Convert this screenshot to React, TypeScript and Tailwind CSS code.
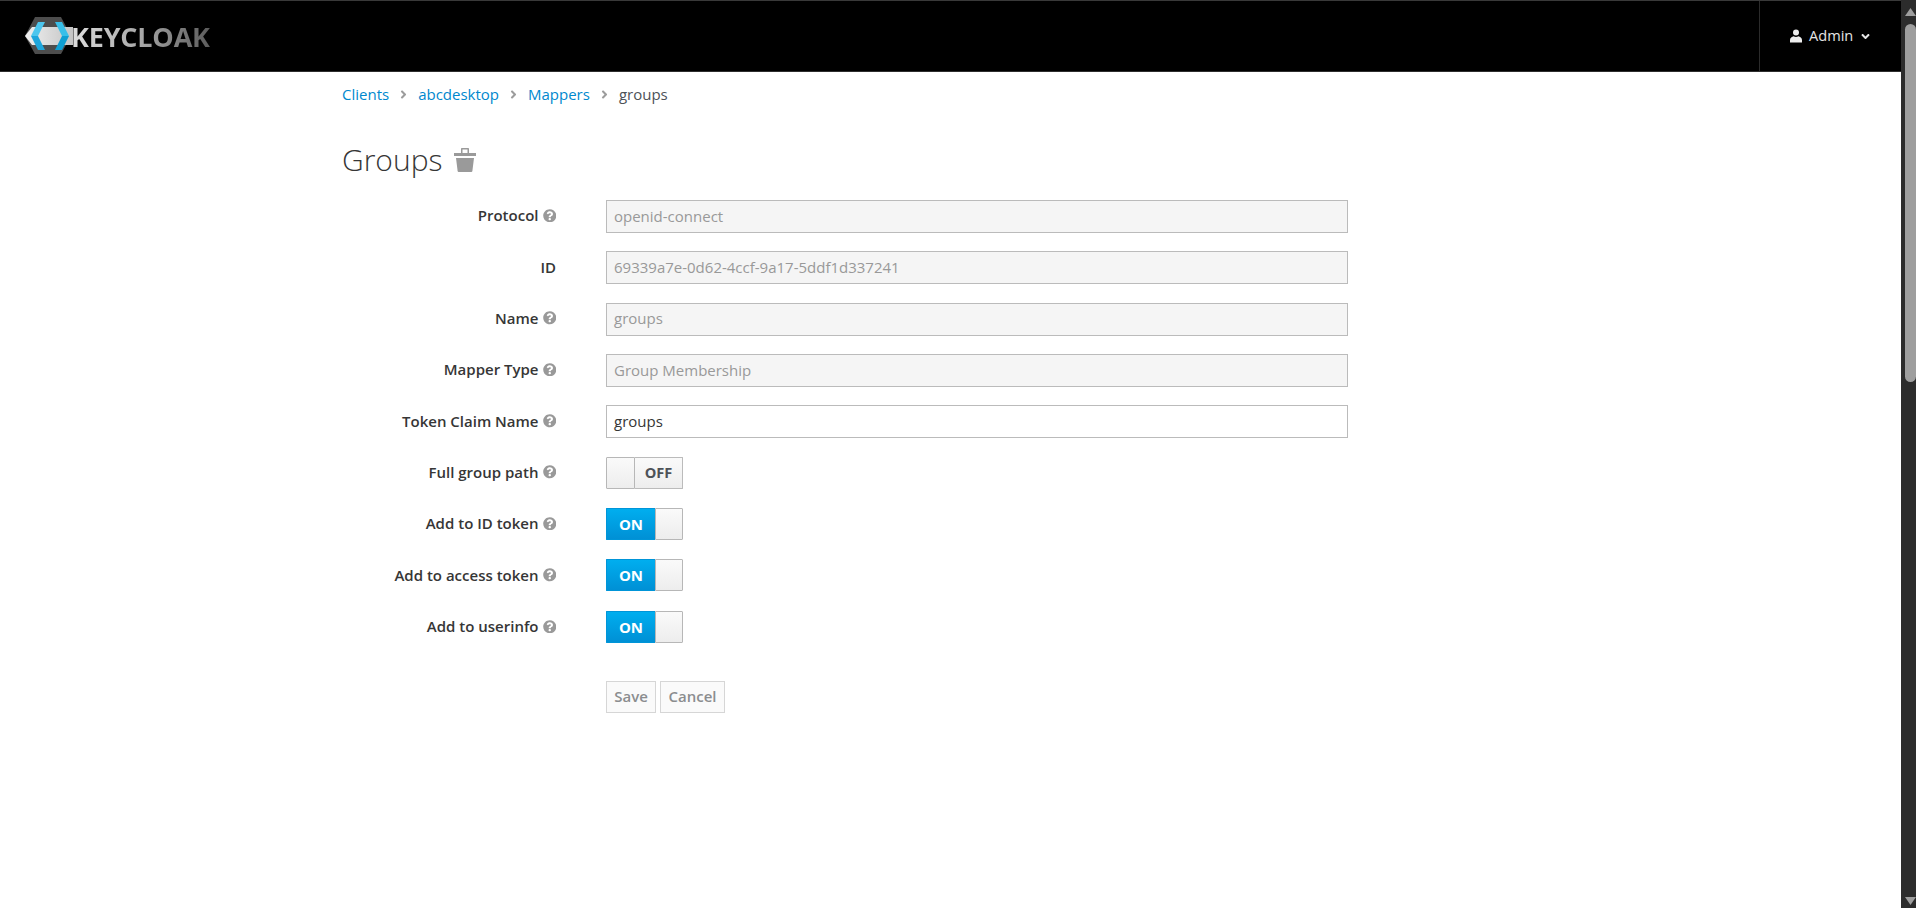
import { FaAngleDown, FaAngleRight, FaQuestionCircle } from "react-icons/fa";

const sans = "font-['Open_Sans',sans-serif]";

const Logo = () => (
  <div className="flex items-center ml-[25px]">
    <svg width="50" height="38" viewBox="0 0 50 38" className="blur-[0.4px]">
      <defs>
        <linearGradient id="band" x1="0" x2="1" y1="0" y2="0">
          <stop offset="0" stopColor="#f0f0f0" />
          <stop offset="1" stopColor="#c4c4c4" />
        </linearGradient>
      </defs>
      <path d="M10 0H36L46 19L36 37H10L0 19Z" fill="#4d4d4d" />
      <path d="M7 10H48V28H7L0 19Z" fill="url(#band)" />
      <path d="M13 5H20L13 19H6Z" fill="#4cc6ee" />
      <path d="M6 19H13L20 33H13Z" fill="#1ea6dc" />
      <path d="M30 5H37L44 19H37Z" fill="#38bfe9" />
      <path d="M37 19H44L37 33H30Z" fill="#0e9fd3" />
    </svg>
    <span className="font-['Open_Sans',sans-serif] font-bold text-[27px] leading-none -ml-[4px] tracking-[-0.2px] text-transparent bg-clip-text bg-gradient-to-r from-[#dedede] via-[#a8a8a8] to-[#5c5c5c] blur-[0.3px]">
      KEYCLOAK
    </span>
  </div>
);

const Header = () => (
  <header className="h-[72px] bg-black border-t border-t-[#393939] border-b border-b-[#2e2e2e] flex items-stretch justify-between shrink-0">
    <Logo />
    <div className="w-[142px] border-l border-[#2b2b2b] flex items-center text-[#e4e4e4] text-[14.6px] pl-[30px]">
      <svg width="12" height="14" viewBox="0 0 12 14" className="mr-[7px]" fill="#eeeeee">
        <circle cx="6" cy="3.4" r="3" />
        <path d="M0 13.5V11C0 8.8 2 7.6 3.6 7.2C5 8.2 7 8.2 8.4 7.2C10 7.6 12 8.8 12 11V13.5Z" />
      </svg>
      <span>Admin</span>
      <FaAngleDown className="ml-[6px] text-[13px]" />
    </div>
  </header>
);

const Crumb = ({ children }: { children: string }) => (
  <>
    <a className="text-[#0088ce]">{children}</a>
    <FaAngleRight className="text-[#9c9c9c] text-[13px] mx-[8px]" />
  </>
);

const Label = ({ text, help = true }: { text: string; help?: boolean }) => (
  <label className="w-[214px] flex items-center justify-end font-semibold text-[#363636] text-[15px] pb-[2px]">
    <span>{text}</span>
    {help && <FaQuestionCircle className="ml-[4px] text-[13.5px] text-[#999999]" />}
  </label>
);

const Field = ({ label, value, disabled, help }: { label: string; value: string; disabled?: boolean; help?: boolean }) => (
  <div className="flex items-center h-[33px]">
    <Label text={label} help={help} />
    <div
      className={`ml-[50px] w-[742px] h-full border px-[7px] pb-[1px] flex items-center text-[15px] ${
        disabled ? "bg-[#f5f5f5] border-[#bbbbbb] text-[#999999]" : "bg-white border-[#bbbbbb] text-[#363636]"
      }`}
    >
      {value}
    </div>
  </div>
);

const Toggle = ({ label, on }: { label: string; on: boolean }) => (
  <div className="flex items-start h-[33px]">
    <div className="h-[33px] flex">
      <Label text={label} />
    </div>
    <div className="ml-[50px] w-[77px] h-[32px] flex items-stretch">
      {on ? (
        <>
          <div className="w-[49px] rounded-l-[1px] bg-gradient-to-b from-[#00aeef] to-[#0090d5] border-y border-l border-[#0095d8] text-white font-bold text-[15px] flex items-center justify-center">
            ON
          </div>
          <div className="w-[28px] rounded-r-[1px] border border-[#b7b7b7] bg-gradient-to-b from-[#fafafa] to-[#ededed]" />
        </>
      ) : (
        <>
          <div className="w-[29px] rounded-l-[1px] border border-[#b7b7b7] bg-gradient-to-b from-[#fafafa] to-[#ededed]" />
          <div className="w-[48px] rounded-r-[1px] border-y border-r border-[#bbbbbb] bg-gradient-to-b from-[#fafafa] to-[#ededed] text-[#4d5258] font-bold text-[14.6px] flex items-center justify-center">
            OFF
          </div>
        </>
      )}
    </div>
  </div>
);

const Scrollbar = () => (
  <div className="w-[15px] shrink-0 bg-[#2c2c2c] flex flex-col items-center">
    <svg width="11" height="8" viewBox="0 0 11 8" className="mt-[8px] ml-[3px]" fill="#9e9e9e">
      <path d="M5.5 0L11 8H0Z" />
    </svg>
    <div className="w-[11px] h-[358px] mt-[8px] ml-[3px] rounded-full bg-[#9e9e9e]" />
    <div className="flex-1" />
    <svg width="11" height="8" viewBox="0 0 11 8" className="mb-[3px] ml-[3px]" fill="#9e9e9e">
      <path d="M5.5 8L11 0H0Z" />
    </svg>
  </div>
);

export default function App() {
  return (
    <div className={`h-screen w-full overflow-hidden flex bg-white ${sans}`}>
      <div className="flex-1 flex flex-col min-w-0">
        <Header />
        <main className="pl-[342px]">
          <nav className="flex items-center h-[45px] text-[15px]">
            <Crumb>Clients</Crumb>
            <Crumb>abcdesktop</Crumb>
            <Crumb>Mappers</Crumb>
            <span className="text-[#4d5258]">groups</span>
          </nav>
          <div className="flex items-center h-[40px] mt-[23px]">
            <h1 className="text-[30px] font-light text-[#363636] leading-none">Groups</h1>
            <svg width="22" height="24" viewBox="0 0 22 24" className="ml-[11px]" fill="#9a9a9a">
              <path d="M7 5V1C7 0.4 7.4 0 8 0H14C14.6 0 15 0.4 15 1V5H22V8H0V5ZM8.5 5H13.5V1.6H8.5Z" fillRule="evenodd" />
              <path d="M2 10H20L18.4 23C18.3 23.6 17.9 24 17.4 24H4.6C4.1 24 3.7 23.6 3.6 23Z" />
            </svg>
          </div>
          <form className="flex flex-col gap-[18.35px] mt-[20px]">
            <Field label="Protocol" value="openid-connect" disabled />
            <Field label="ID" value="69339a7e-0d62-4ccf-9a17-5ddf1d337241" disabled help={false} />
            <Field label="Name" value="groups" disabled />
            <Field label="Mapper Type" value="Group Membership" disabled />
            <Field label="Token Claim Name" value="groups" />
            <Toggle label="Full group path" on={false} />
            <Toggle label="Add to ID token" on />
            <Toggle label="Add to access token" on />
            <Toggle label="Add to userinfo" on />
          </form>
          <div className="flex gap-[4px] ml-[264px] mt-[37px] text-[15px] font-semibold text-[#8b8d8f]">
            <button className="w-[50px] h-[32px] pb-[2px] border border-[#d6d6d6] bg-[#fafafa]">Save</button>
            <button className="w-[65px] h-[32px] pb-[2px] border border-[#d6d6d6] bg-[#fafafa]">Cancel</button>
          </div>
        </main>
      </div>
      <Scrollbar />
    </div>
  );
}
